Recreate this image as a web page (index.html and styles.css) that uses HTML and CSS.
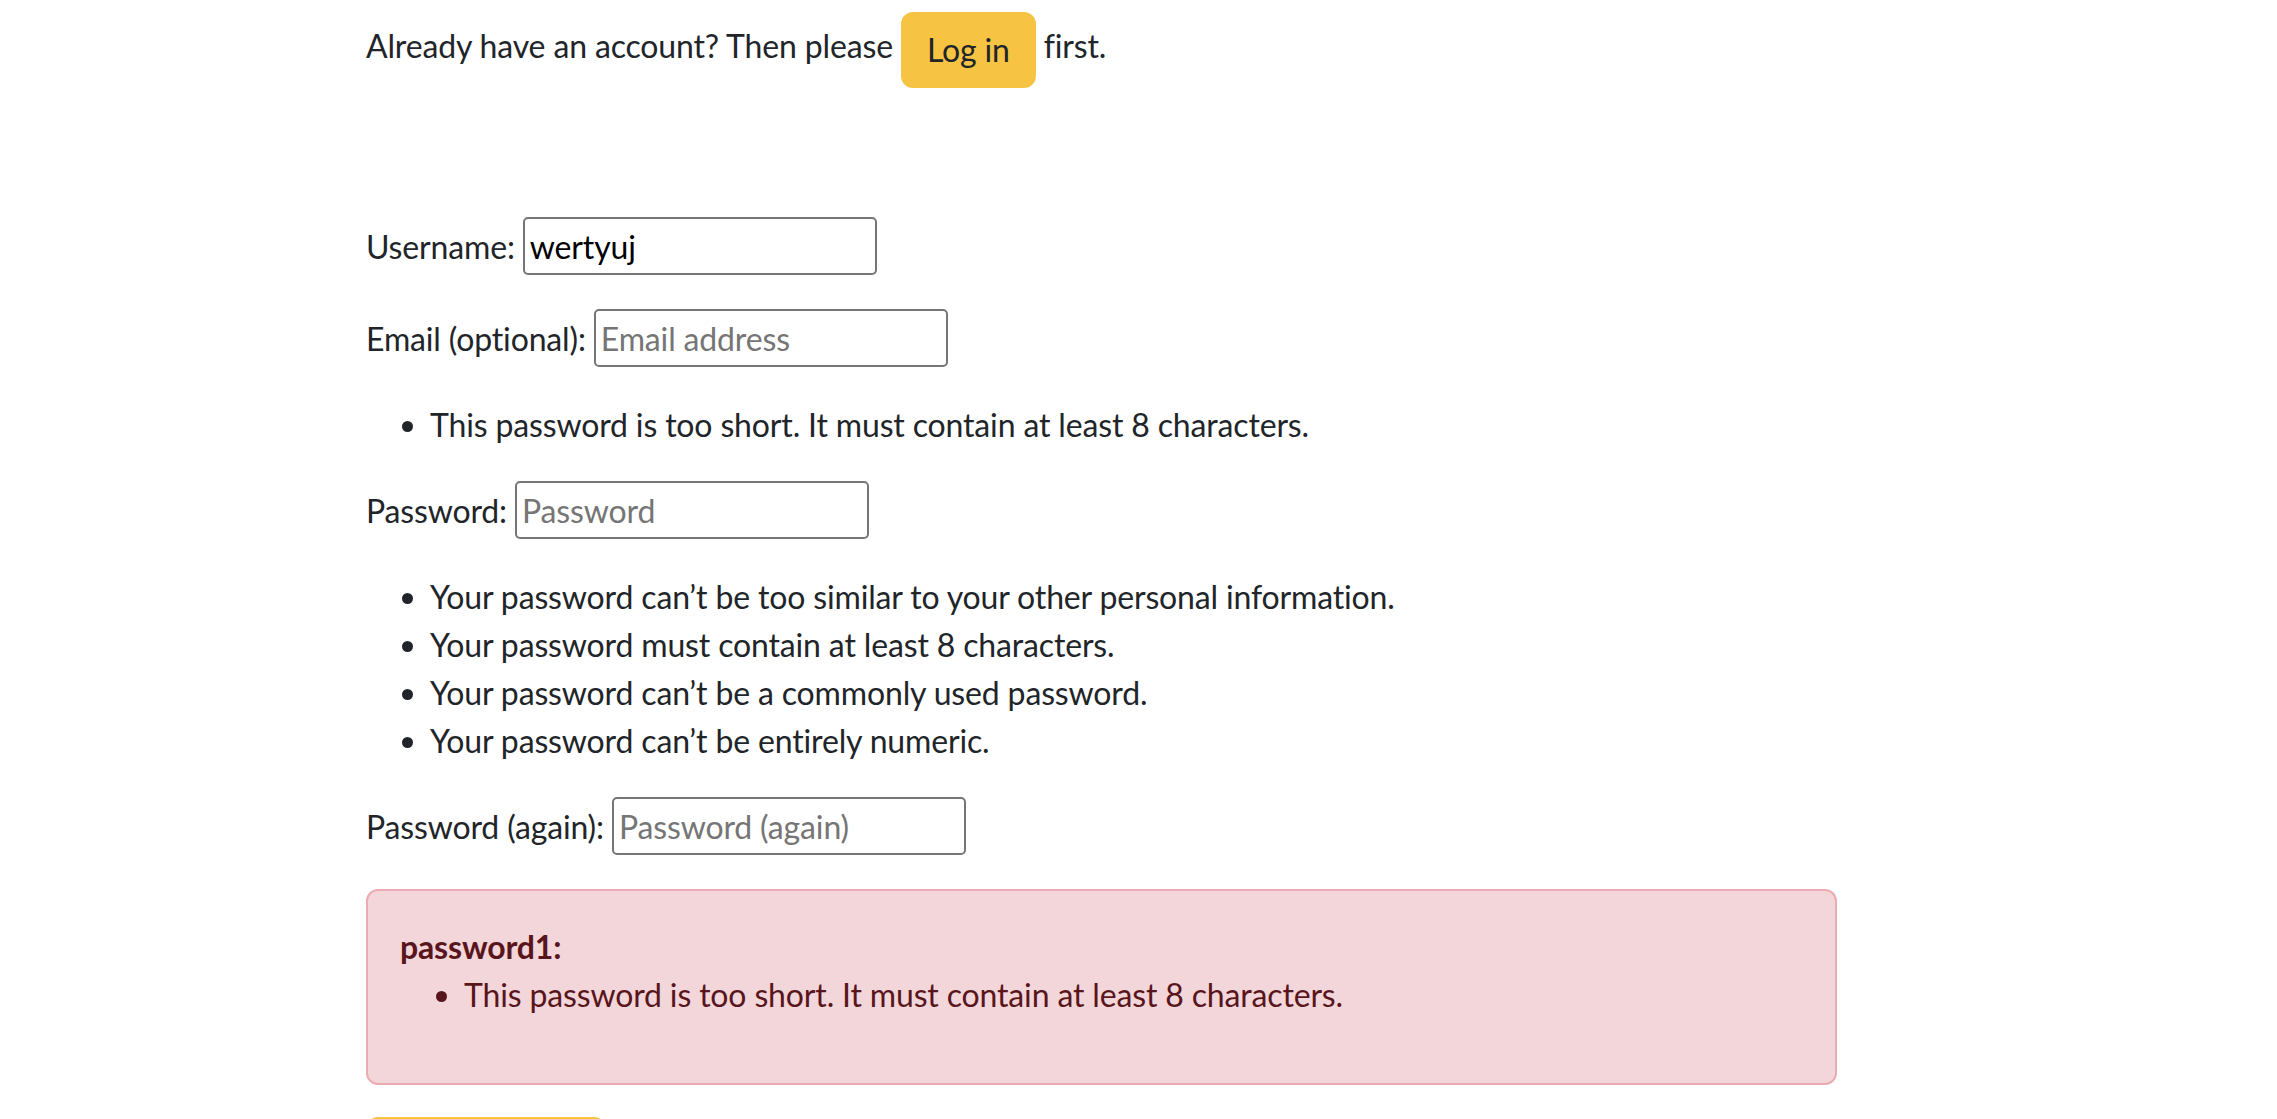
FILE: index.html
```html
<!DOCTYPE html>
<html lang="en">
<head>
<meta charset="utf-8">
<title>Sign Up</title>
<link rel="stylesheet" href="styles.css">
</head>
<body>
<main class="page">
  <p class="intro">Already have an account? Then please <a class="btn btn-warning" href="#">Log in</a> first.</p>

  <form class="signup">
    <p class="row"><label for="id_username">Username:</label> <input class="field" id="id_username" type="text" value="wertyuj"></p>
    <p class="row"><label for="id_email">Email (optional):</label> <input class="field" id="id_email" type="email" placeholder="Email address"></p>
    <ul class="list">
      <li>This password is too short. It must contain at least 8 characters.</li>
    </ul>
    <p class="row"><label for="id_password1">Password:</label> <input class="field" id="id_password1" type="password" placeholder="Password"></p>
    <ul class="list">
      <li>Your password can’t be too similar to your other personal information.</li>
      <li>Your password must contain at least 8 characters.</li>
      <li>Your password can’t be a commonly used password.</li>
      <li>Your password can’t be entirely numeric.</li>
    </ul>
    <p class="row"><label for="id_password2">Password (again):</label> <input class="field" id="id_password2" type="password" placeholder="Password (again)"></p>

    <div class="alert">
      <strong class="alert-title">password1:</strong>
      <ul class="list alert-list">
        <li>This password is too short. It must contain at least 8 characters.</li>
      </ul>
    </div>

    <button class="btn btn-warning submit" type="submit">Sign Up »</button>
  </form>
</main>
</body>
</html>
```

FILE: styles.css
```css
html, body {
  margin: 0;
  padding: 0;
  background: #ffffff;
}

body {
  font-family: Lato, "Open Sans", "Liberation Sans", sans-serif;
  font-size: 32px;
  line-height: 48px;
  letter-spacing: -0.15px;
  color: #212529;
}

.page {
  width: 1471px;
  margin-left: 366px;
  padding-top: 12px;
}

.intro {
  margin: 0;
}

.btn {
  display: inline-block;
  box-sizing: border-box;
  padding: 12px 24px;
  border: 2px solid #f6c343;
  border-radius: 12px;
  background: #f6c343;
  color: #212529;
  font-family: inherit;
  font-size: 32px;
  line-height: 48px;
  letter-spacing: -0.15px;
  text-decoration: none;
  vertical-align: middle;
}

.signup {
  margin-top: 129px;
}

.row {
  margin: 0 0 34px;
}

.field {
  box-sizing: border-box;
  width: 354px;
  height: 58px;
  padding: 0 5px;
  border: 2px solid #767676;
  border-radius: 5px;
  font-family: inherit;
  font-size: 32px;
  letter-spacing: -0.15px;
  color: #000000;
  background: #ffffff;
  vertical-align: baseline;
}

.field::placeholder {
  color: #757575;
}

.list {
  margin: 0 0 32px;
  padding-left: 64px;
}

.alert {
  border: 2px solid #ebabb2;
  border-radius: 12px;
  background: #f3d6d9;
  color: #58151c;
  padding: 32px;
  margin-bottom: 32px;
}

.alert-title {
  display: block;
  font-weight: 700;
}

.alert-list {
  margin: 0 0 32px;
}

.submit {
  min-width: 240px;
  cursor: pointer;
}
```
